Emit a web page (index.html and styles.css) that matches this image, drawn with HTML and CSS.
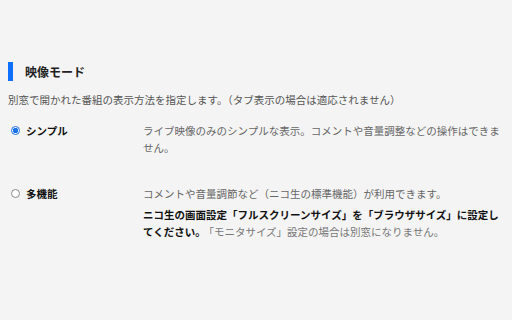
FILE: index.html
```html
<!DOCTYPE html>
<html lang="ja">

<head>
  <meta charset="UTF-8">
  <title>映像モード</title>

  <link rel="stylesheet" href="styles.css">
</head>

<body>
  <div class="section">
    <h2 class="title">映像モード</h2>
    <p class="lead">別窓で開かれた番組の表示方法を指定します。（タブ表示の場合は適応されません）</p>

    <div class="option">
      <label class="choice">
        <input type="radio" name="mode" value="simple" checked>
        <span>シンプル</span>
      </label>
      <div class="desc">
        <p>ライブ映像のみのシンプルな表示。コメントや音量調整などの操作はできません。</p>
      </div>
    </div>

    <div class="option">
      <label class="choice">
        <input type="radio" name="mode" value="full">
        <span>多機能</span>
      </label>
      <div class="desc">
        <p>コメントや音量調節など（ニコ生の標準機能）が利用できます。</p>
        <p class="note"><strong>ニコ生の画面設定「フルスクリーンサイズ」を「ブラウザサイズ」に設定してください。</strong>「モニタサイズ」設定の場合は別窓になりません。</p>
      </div>
    </div>
  </div>
</body>

</html>
```

FILE: styles.css
```css
body {
  font-family: "Noto Sans CJK JP", "Noto Sans", sans-serif;
  background: #f4f4f4;
  color: #222;
  margin: 0;
  padding: 0;
}

.section {
  padding: 62px 8px 0 8px;
}

.title {
  margin: 0;
  border-left: 5px solid #0f6fff;
  padding-left: 12px;
  font-size: 12px;
  line-height: 19px;
  font-weight: bold;
  color: #222;
}

.lead {
  margin: 10px 0 0;
  font-size: 10.5px;
  line-height: 17px;
  color: #555;
}

.option {
  display: grid;
  grid-template-columns: 135px 1fr;
  margin-top: 14px;
}

.option + .option {
  margin-top: 29px;
}

.choice {
  display: flex;
  align-items: center;
  gap: 6px;
  padding-left: 3px;
  height: 17px;
  font-size: 10.5px;
  font-weight: bold;
  color: #111;
}

.choice input {
  appearance: none;
  margin: 0;
  width: 9px;
  height: 9px;
  border: 1px solid #8a8a8a;
  border-radius: 50%;
  background: #fff;
}

.choice input:checked {
  border-color: #1a73e8;
  background: radial-gradient(circle, #1a73e8 0 2.5px, #fff 3px);
}

.desc p {
  margin: 0;
  font-size: 10.5px;
  line-height: 17px;
  color: #666;
}

.desc .note {
  margin-top: 4px;
  color: #777;
}

.desc .note strong {
  color: #111;
  margin-right: 3px;
}
```
